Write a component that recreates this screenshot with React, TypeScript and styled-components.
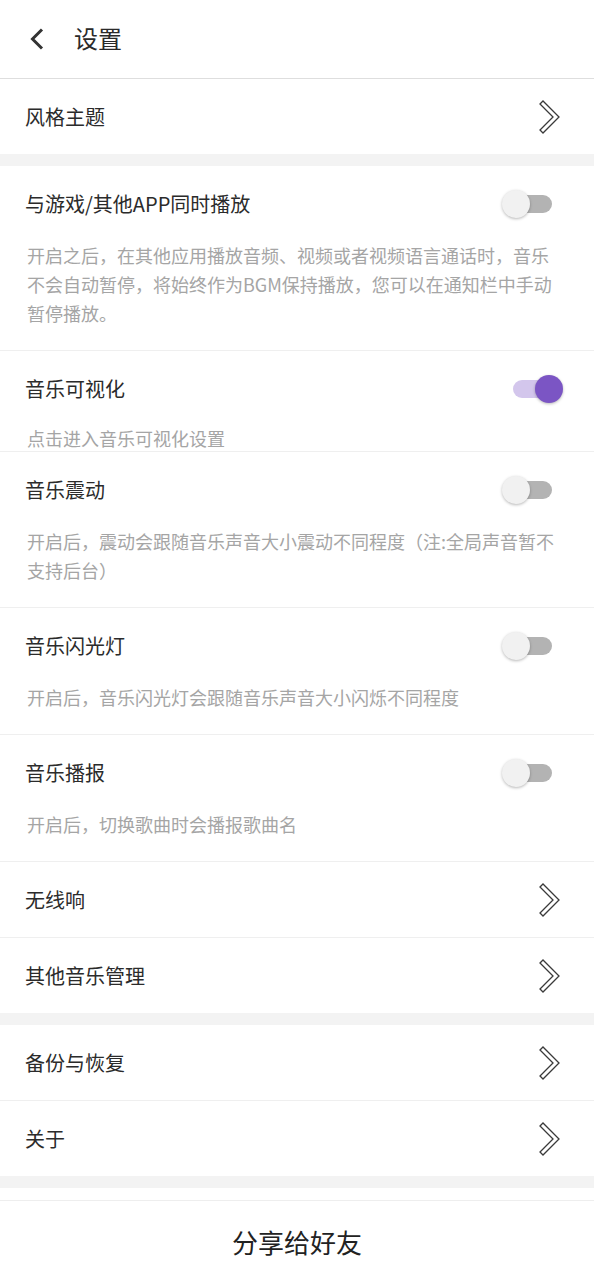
import React from "react";
import styled, { createGlobalStyle } from "styled-components";

const GlobalStyle = createGlobalStyle`
  html, body {
    margin: 0;
    padding: 0;
    background: #fff;
  }
  body {
    font-family: "Noto Sans CJK SC", "Noto Sans", sans-serif;
    -webkit-font-smoothing: antialiased;
  }
`;

const Page = styled.div`
  width: 100%;
  background: #fff;
`;

const Header = styled.header`
  height: 79px;
  box-sizing: border-box;
  padding: 0 0 3px 29px;
  border-bottom: 1px solid #dedede;
  display: flex;
  align-items: center;
`;

const BackButton = styled.button`
  border: 0;
  padding: 0;
  background: none;
  display: flex;
  align-items: center;
  margin-top: 2px;
`;

const HeaderTitle = styled.h1`
  margin: 0 0 0 29px;
  font-size: 24px;
  font-weight: 400;
  color: #2a2a2a;
`;

const Gap = styled.div`
  height: 12px;
  background: #f3f3f3;
`;

const Group = styled.div`
  background: #fff;
  & > *:last-child {
    border-bottom: none;
  }
`;

const LinkRow = styled.div`
  height: 75px;
  border-bottom: 1px solid #efefef;
  display: flex;
  align-items: center;
  justify-content: space-between;
  padding: 0 32px 0 25px;
`;

const Label = styled.span`
  font-size: 20px;
  color: #2b2b2b;
`;

const ToggleItem = styled.div`
  border-bottom: 1px solid #efefef;
`;

const ToggleHead = styled.div`
  height: 75px;
  display: flex;
  align-items: center;
  justify-content: space-between;
  padding: 0 31px 0 25px;
`;

const Desc = styled.p<{ $compact?: boolean }>`
  margin: 0;
  padding: ${(p) => (p.$compact ? "0 32px 0 27px" : "0 32px 22px 27px")};
  font-size: 18px;
  line-height: ${(p) => (p.$compact ? "25px" : "29px")};
  color: #a5a5a5;
`;

const Switch = styled.div`
  position: relative;
  width: 62px;
  height: 30px;
  flex: none;
`;

const Track = styled.div<{ $on: boolean }>`
  position: absolute;
  left: 12px;
  top: 6px;
  width: 39px;
  height: 18px;
  border-radius: 9px;
  background: ${(p) => (p.$on ? "#d3c6ec" : "#b3b3b3")};
`;

const Knob = styled.div<{ $on: boolean }>`
  position: absolute;
  top: 1px;
  left: ${(p) => (p.$on ? "34px" : "1px")};
  width: 28px;
  height: 28px;
  border-radius: 50%;
  background: ${(p) => (p.$on ? "#7b55c4" : "#f1f1f1")};
  box-shadow: 0 1px 3px rgba(0, 0, 0, 0.28);
`;

const Spacer = styled.div`
  height: 12px;
  background: #fff;
`;

const Footer = styled.footer`
  height: 80px;
  border-top: 1px solid #eeeeee;
  display: flex;
  align-items: center;
  justify-content: center;
  font-size: 26px;
  color: #222;
`;

const BackIcon = () => (
  <svg width="16" height="24" viewBox="0 0 16 24">
    <polyline
      points="13,2.5 3.5,12 13,21.5"
      fill="none"
      stroke="#333"
      strokeWidth="3"
      strokeLinejoin="miter"
    />
  </svg>
);

const Chevron = () => (
  <svg width="24" height="34" viewBox="0 0 24 34">
    <polygon
      points="2,4 5,1 21,17 5,33 2,30 15,17"
      fill="none"
      stroke="#3a3a3a"
      strokeWidth="1.3"
      strokeLinejoin="miter"
    />
  </svg>
);

const Toggle = ({ on }: { on: boolean }) => (
  <Switch>
    <Track $on={on} />
    <Knob $on={on} />
  </Switch>
);

const Link = ({ label }: { label: string }) => (
  <LinkRow>
    <Label>{label}</Label>
    <Chevron />
  </LinkRow>
);

interface ToggleRowProps {
  label: string;
  desc: string;
  on?: boolean;
  compact?: boolean;
}

const ToggleRow = ({ label, desc, on = false, compact }: ToggleRowProps) => (
  <ToggleItem>
    <ToggleHead>
      <Label>{label}</Label>
      <Toggle on={on} />
    </ToggleHead>
    <Desc $compact={compact}>{desc}</Desc>
  </ToggleItem>
);

const App = () => {
  return (
    <Page>
      <GlobalStyle />
      <Header>
        <BackButton>
          <BackIcon />
        </BackButton>
        <HeaderTitle>设置</HeaderTitle>
      </Header>

      <Group>
        <Link label="风格主题" />
      </Group>
      <Gap />

      <Group>
        <ToggleRow
          label="与游戏/其他APP同时播放"
          desc="开启之后，在其他应用播放音频、视频或者视频语言通话时，音乐不会自动暂停，将始终作为BGM保持播放，您可以在通知栏中手动暂停播放。"
        />
        <ToggleRow label="音乐可视化" desc="点击进入音乐可视化设置" on compact />
        <ToggleRow
          label="音乐震动"
          desc="开启后，震动会跟随音乐声音大小震动不同程度（注:全局声音暂不支持后台）"
        />
        <ToggleRow label="音乐闪光灯" desc="开启后，音乐闪光灯会跟随音乐声音大小闪烁不同程度" />
        <ToggleRow label="音乐播报" desc="开启后，切换歌曲时会播报歌曲名" />
        <Link label="无线响" />
        <Link label="其他音乐管理" />
      </Group>
      <Gap />

      <Group>
        <Link label="备份与恢复" />
        <Link label="关于" />
      </Group>
      <Gap />
      <Spacer />

      <Footer>分享给好友</Footer>
    </Page>
  );
};

export default App;
